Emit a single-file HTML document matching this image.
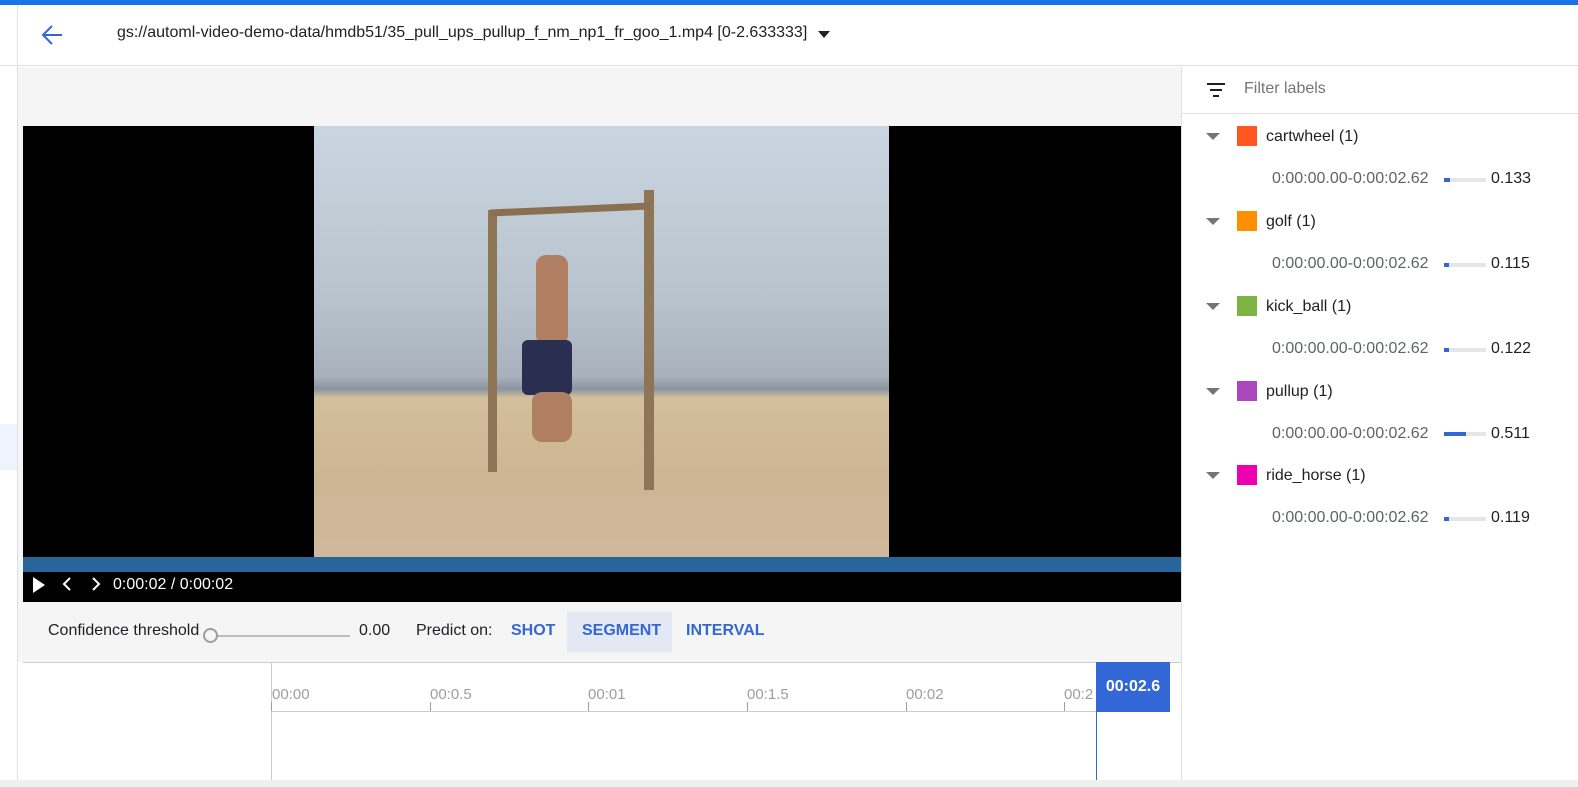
<!DOCTYPE html>
<html><head><style>
*{margin:0;padding:0;box-sizing:border-box}
body{width:1578px;height:787px;overflow:hidden;background:#fff;font-family:"Liberation Sans",Arial,sans-serif;position:relative}
.a{position:absolute}
.row{position:absolute;left:1210px;font-size:16px;color:#202124}
.tri{position:absolute;left:-4px;top:5px;width:0;height:0;border-left:7px solid transparent;border-right:7px solid transparent;border-top:7px solid #757575}
.sw{position:absolute;left:27px;top:-2px;width:20px;height:20px}
.lb{position:absolute;left:56px;top:0;white-space:nowrap}
.sub{position:absolute;left:1272px;font-size:16px;color:#5f6368;white-space:nowrap}
.bar{position:absolute;left:1444px;width:42px;height:4px;background:#e6e6e6}
.bar i{position:absolute;left:0;top:0;height:4px;background:#3367d6}
.val{position:absolute;left:1491px;font-size:16px;color:#202124}
.tk{position:absolute;top:686px;font-size:15px;color:#9e9e9e}
.tm{position:absolute;top:702px;width:1px;height:9px;background:#9e9e9e}
</style></head><body>
<div class="a" style="left:0;top:0;width:1578px;height:5px;background:#1a73e8"></div>
<div class="a" style="left:0;top:5px;width:1578px;height:61px;border-bottom:1px solid #e0e0e0;background:#fff"></div>
<div class="a" style="left:17px;top:5px;width:1px;height:782px;background:#e0e0e0"></div>
<div class="a" style="left:0;top:424px;width:17px;height:46px;background:#eef3fd"></div>
<svg class="a" style="left:40px;top:24px" width="24" height="22" viewBox="0 0 24 22"><path d="M22 11H4M12 2L3 11l9 9" stroke="#3367d6" stroke-width="2" fill="none"/></svg>
<div class="a" style="left:117px;top:24px;font-size:16px;color:#202124;white-space:nowrap">gs://automl-video-demo-data/hmdb51/35_pull_ups_pullup_f_nm_np1_fr_goo_1.mp4 [0-2.633333]</div>
<div class="a" style="left:818px;top:31px;border-left:6px solid transparent;border-right:6px solid transparent;border-top:7px solid #202124"></div>
<div class="a" style="left:18px;top:67px;width:1163px;height:595px;background:#f5f5f5"></div>
<div class="a" style="left:23px;top:126px;width:1158px;height:431px;background:#000"></div>
<div class="a" style="left:314px;top:126px;width:575px;height:431px;background:linear-gradient(180deg,#c9d5e0 0%,#b8c3cd 40%,#a9b2bc 58%,#8a94a0 61%,#d2bf9c 63%,#cdb693 80%,#d0b89b 100%)"></div>
<div class="a" style="left:488px;top:210px;width:9px;height:262px;background:#8e7555"></div>
<div class="a" style="left:644px;top:190px;width:10px;height:300px;background:#8e7555"></div>
<div class="a" style="left:490px;top:206px;width:160px;height:7px;background:#8a7050;transform:rotate(-2.5deg)"></div>
<div class="a" style="left:536px;top:255px;width:32px;height:90px;background:#b07e62;border-radius:10px"></div>
<div class="a" style="left:522px;top:340px;width:50px;height:55px;background:#2a2e50;border-radius:6px"></div>
<div class="a" style="left:532px;top:392px;width:40px;height:50px;background:#b07e62;border-radius:10px"></div>
<div class="a" style="left:23px;top:557px;width:1158px;height:15px;background:#27659a"></div>
<div class="a" style="left:23px;top:572px;width:1158px;height:30px;background:#000"></div>
<div class="a" style="left:33px;top:577px;border-top:8px solid transparent;border-bottom:8px solid transparent;border-left:12px solid #fff"></div>
<svg class="a" style="left:60px;top:576px" width="50" height="16"><path d="M10 2L4 8l6 6M33 2l6 6-6 6" stroke="#fff" stroke-width="2" fill="none"/></svg>
<div class="a" style="left:113px;top:576px;font-size:16px;color:#fff">0:00:02 / 0:00:02</div>
<div class="a" style="left:48px;top:622px;font-size:16px;color:#202124">Confidence threshold</div>
<div class="a" style="left:211px;top:635px;width:139px;height:2px;background:#bdbdbd"></div>
<div class="a" style="left:203px;top:628px;width:15px;height:15px;border-radius:50%;border:2px solid #9e9e9e;background:#f5f5f5"></div>
<div class="a" style="left:359px;top:622px;font-size:16px;color:#202124">0.00</div>
<div class="a" style="left:416px;top:622px;font-size:16px;color:#202124">Predict on:</div>
<div class="a" style="left:567px;top:612px;width:105px;height:40px;background:#e3e8f4"></div>
<div class="a" style="left:511px;top:622px;font-size:16px;color:#3367d6;font-weight:bold">SHOT</div>
<div class="a" style="left:582px;top:622px;font-size:16px;color:#3367d6;font-weight:bold">SEGMENT</div>
<div class="a" style="left:686px;top:622px;font-size:16px;color:#3367d6;font-weight:bold">INTERVAL</div>
<div class="a" style="left:23px;top:662px;width:1158px;height:118px;background:#fff;border-top:1px solid #ccc"></div>
<div class="a" style="left:271px;top:662px;width:1px;height:118px;background:#ccc"></div>
<div class="a" style="left:271px;top:711px;width:825px;height:1px;background:#ccc"></div>
<div class="tk" style="left:272px">00:00</div><div class="tm" style="left:271px"></div>
<div class="tk" style="left:430px">00:0.5</div><div class="tm" style="left:430px"></div>
<div class="tk" style="left:588px">00:01</div><div class="tm" style="left:588px"></div>
<div class="tk" style="left:747px">00:1.5</div><div class="tm" style="left:747px"></div>
<div class="tk" style="left:906px">00:02</div><div class="tm" style="left:906px"></div>
<div class="tk" style="left:1064px">00:2</div><div class="tm" style="left:1064px"></div>
<div class="a" style="left:1096px;top:662px;width:74px;height:50px;background:#3367d6;color:#fff;font-weight:bold;font-size:16px;line-height:50px;text-align:center">00:02.6</div>
<div class="a" style="left:1096px;top:712px;width:1px;height:68px;background:#3367d6"></div>
<div class="a" style="left:0;top:780px;width:1578px;height:7px;background:#f0f0f0"></div>
<div class="a" style="left:1181px;top:67px;width:397px;height:713px;background:#fff;border-left:1px solid #e0e0e0"></div>
<div class="a" style="left:1182px;top:113px;width:396px;height:1px;background:#e0e0e0"></div>
<svg class="a" style="left:1207px;top:83px" width="20" height="14"><path d="M0 1h18M3 7h12M6 13h6" stroke="#202124" stroke-width="2"/></svg>
<div class="a" style="left:1244px;top:80px;font-size:16px;color:#757575">Filter labels</div>

<div class="row" style="top:128px"><div class="tri"></div><div class="sw" style="background:#ff5722"></div><div class="lb">cartwheel (1)</div></div>
<div class="sub" style="top:170px">0:00:00.00-0:00:02.62</div><div class="bar" style="top:178px"><i style="width:6px"></i></div><div class="val" style="top:170px">0.133</div>
<div class="row" style="top:213px"><div class="tri"></div><div class="sw" style="background:#ff8f00"></div><div class="lb">golf (1)</div></div>
<div class="sub" style="top:255px">0:00:00.00-0:00:02.62</div><div class="bar" style="top:263px"><i style="width:5px"></i></div><div class="val" style="top:255px">0.115</div>
<div class="row" style="top:298px"><div class="tri"></div><div class="sw" style="background:#7cb342"></div><div class="lb">kick_ball (1)</div></div>
<div class="sub" style="top:340px">0:00:00.00-0:00:02.62</div><div class="bar" style="top:348px"><i style="width:5px"></i></div><div class="val" style="top:340px">0.122</div>
<div class="row" style="top:383px"><div class="tri"></div><div class="sw" style="background:#ab47bc"></div><div class="lb">pullup (1)</div></div>
<div class="sub" style="top:425px">0:00:00.00-0:00:02.62</div><div class="bar" style="top:432px"><i style="width:22px"></i></div><div class="val" style="top:425px">0.511</div>
<div class="row" style="top:467px"><div class="tri"></div><div class="sw" style="background:#ec00b0"></div><div class="lb">ride_horse (1)</div></div>
<div class="sub" style="top:509px">0:00:00.00-0:00:02.62</div><div class="bar" style="top:517px"><i style="width:5px"></i></div><div class="val" style="top:509px">0.119</div>
</body></html>
